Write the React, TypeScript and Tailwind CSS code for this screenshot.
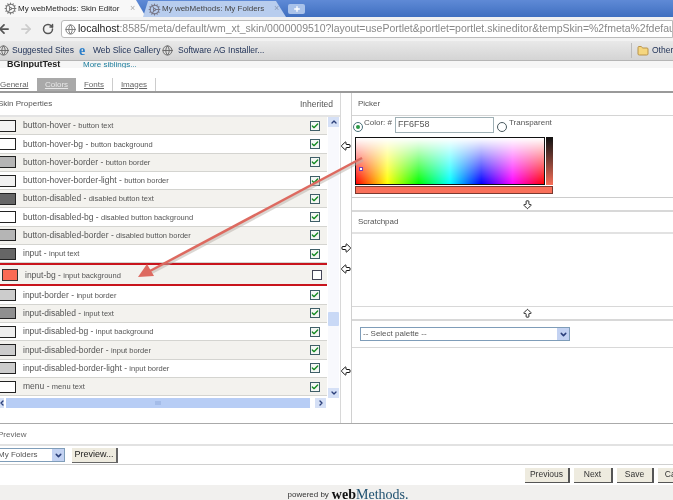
import { ArrowBigDown, ArrowBigLeft, ArrowBigRight, ArrowBigUp, ArrowLeft, ArrowRight, Check, ChevronDown, ChevronLeft, ChevronRight, ChevronUp, Cog, Folder, Globe, Plus, RotateCw } from "lucide-react"

const topRows = [
  { color: "bg-[#f3f3f3]", name: "button-hover", desc: "button text", striped: true },
  { color: "bg-white", name: "button-hover-bg", desc: "button background", striped: false },
  { color: "bg-[#b5b5b5]", name: "button-hover-border", desc: "button border", striped: true },
  { color: "bg-[#f1f1f1]", name: "button-hover-border-light", desc: "button border", striped: false },
  { color: "bg-[#666666]", name: "button-disabled", desc: "disabled button text", striped: true },
  { color: "bg-white", name: "button-disabled-bg", desc: "disabled button background", striped: false },
  { color: "bg-[#b5b5b5]", name: "button-disabled-border", desc: "disabled button border", striped: true },
  { color: "bg-[#666666]", name: "input", desc: "input text", striped: false },
]

const bottomRows = [
  { color: "bg-[#cccccc]", name: "input-border", desc: "input border", striped: false },
  { color: "bg-[#8f8f8f]", name: "input-disabled", desc: "input text", striped: true },
  { color: "bg-[#eeeeee]", name: "input-disabled-bg", desc: "input background", striped: false },
  { color: "bg-[#cccccc]", name: "input-disabled-border", desc: "input border", striped: true },
  { color: "bg-[#cccccc]", name: "input-disabled-border-light", desc: "input border", striped: false },
  { color: "bg-white", name: "menu", desc: "menu text", striped: true },
]

function PropertyRow({ color, name, desc, striped }: { color: string; name: string; desc: string; striped: boolean }) {
  return (
    <div className={`flex h-[18.3px] items-center border-b border-[#d4d4d0] ${striped ? "bg-[#f3f2ee]" : "bg-white"}`}>
      <span className={`ml-[-1px] h-[12px] w-[17px] shrink-0 border border-[#222] ${color}`} />
      <span className="ml-[7px] flex-1 truncate text-[8.5px] text-[#555]">
        {name} - <span className="text-[7.5px]">{desc}</span>
      </span>
      <span className="mr-[7px] flex h-[10px] w-[10px] shrink-0 items-center justify-center border border-[#3f5f68] bg-[#f4f7f4]">
        <Check className="h-[8px] w-[8px] text-[#128a20]" strokeWidth={4} />
      </span>
    </div>
  )
}

function Select({ label, className }: { label: string; className: string }) {
  return (
    <div className={`flex h-[14px] items-center justify-between border border-[#7f9db9] bg-white text-[8px] text-[#555] ${className}`}>
      <span className="pl-[2px] whitespace-nowrap">{label}</span>
      <span className="flex h-full w-[12px] items-center justify-center bg-[#c3d2f2]">
        <ChevronDown className="h-[9px] w-[9px] text-[#2b3f7a]" strokeWidth={4} />
      </span>
    </div>
  )
}

function FootButton({ label, className }: { label: string; className: string }) {
  return (
    <div className={`flex h-[15px] items-center justify-center border-r-2 border-b border-[#555] bg-[#eeebdf] text-[8.5px] text-[#333] ${className}`}>
      {label}
    </div>
  )
}

export default function App() {
  return (
    <div className="relative flex h-[500px] w-[673px] flex-col overflow-hidden bg-white font-['Liberation_Sans',sans-serif] blur-[0.25px]">
      {/* browser tabs */}
      <div className="flex h-[17px] shrink-0 items-end bg-gradient-to-b from-[#5f8ad6] to-[#3f6fc0]">
        <div className="flex h-[17px] w-[146px] shrink-0 items-center bg-[#f8f8f8] pl-[4px] [clip-path:polygon(0_0,136px_0,146px_100%,0_100%)]">
          <Cog className="h-[13px] w-[13px] shrink-0 text-[#777]" />
          <span className="ml-[1px] w-[107px] shrink-0 text-[8px] whitespace-nowrap text-[#222]">My webMethods: Skin Editor</span>
          <span className="ml-[5px] text-[9px] text-[#aaa]">×</span>
        </div>
        <div className="ml-[-3px] flex h-[16px] w-[143px] shrink-0 items-center bg-[#b8cdee] pl-[5px] [clip-path:polygon(5px_0,133px_0,143px_100%,0_100%)]">
          <Cog className="h-[13px] w-[13px] shrink-0 text-[#778]" />
          <span className="ml-[1px] w-[107px] shrink-0 text-[8px] whitespace-nowrap text-[#444]">My webMethods: My Folders</span>
          <span className="ml-[5px] text-[9px] text-[#8a9bb8]">×</span>
        </div>
        <div className="mb-[3px] ml-[2px] flex h-[10px] w-[17px] items-center justify-center rounded-[2px] bg-[#a9c2ea]">
          <Plus className="h-[8px] w-[8px] text-white" strokeWidth={4} />
        </div>
      </div>

      {/* toolbar */}
      <div className="flex h-[24px] shrink-0 items-center bg-[#f2f2f2]">
        <ArrowLeft className="ml-[-3px] h-[14px] w-[14px] shrink-0 text-[#555]" strokeWidth={3} />
        <ArrowRight className="ml-[8px] h-[14px] w-[14px] shrink-0 text-[#ccc]" strokeWidth={3} />
        <RotateCw className="ml-[9px] h-[12px] w-[12px] shrink-0 text-[#555]" strokeWidth={3} />
        <div className="ml-[7px] flex h-[18px] flex-1 items-center overflow-hidden rounded-l-[3px] border border-[#bbb] bg-white pl-[3px]">
          <Globe className="h-[11px] w-[11px] shrink-0 text-[#777]" />
          <span className="ml-[2px] text-[10.5px] whitespace-nowrap text-[#888]">
            <span className="text-[#222]">localhost</span>:8585/meta/default/wm_xt_skin/0000009510?layout=usePortlet&portlet=portlet.skineditor&tempSkin=%2fmeta%2fdefault
          </span>
        </div>
      </div>

      {/* bookmarks */}
      <div className="flex h-[20px] shrink-0 items-center border-b border-[#b5b5b5] bg-gradient-to-b from-[#e9e9e9] to-[#d4d4d4] text-[8.5px] text-[#1d2f55]">
        <Globe className="ml-[-2px] h-[11px] w-[11px] shrink-0 fill-[#ddd] text-[#666]" />
        <span className="ml-[3px] w-[56px] shrink-0 whitespace-nowrap">Suggested Sites</span>
        <span className="ml-[11px] w-[10px] shrink-0 font-['Liberation_Serif',serif] text-[14px] leading-none font-bold text-[#2d7fc9]">e</span>
        <span className="ml-[4px] w-[60px] shrink-0 whitespace-nowrap">Web Slice Gallery</span>
        <Globe className="ml-[9px] h-[11px] w-[11px] shrink-0 fill-[#ddd] text-[#666]" />
        <span className="ml-[5px] whitespace-nowrap">Software AG Installer...</span>
        <span className="ml-auto h-[15px] w-px bg-[#bbb]" />
        <Folder className="ml-[5px] h-[12px] w-[12px] shrink-0 fill-[#f5d67f] text-[#b8934a]" />
        <span className="ml-[3px] w-[21px] whitespace-nowrap">Other</span>
      </div>

      {/* page heading, scrolled under the bookmarks */}
      <div className="flex h-[7px] shrink-0 items-end overflow-hidden bg-[#f6f6f6]">
        <span className="mb-[-3px] ml-[7px] w-[76px] text-[9px] font-bold text-[#222]">BGInputTest</span>
        <span className="mb-[-3px] text-[8px] text-[#1c7d9c] underline">More siblings...</span>
      </div>

      {/* section tabs */}
      <div className="mt-[10px] flex h-[13px] shrink-0 items-end text-[8px] text-[#666]">
        <span className="w-[37px] underline">General</span>
        <span className="flex h-[13px] w-[39px] items-center justify-center bg-[#a9a9a9] text-[#e8e8e8] underline">Colors</span>
        <span className="flex h-[13px] w-[37px] items-center justify-center border-r border-[#ccc] underline">Fonts</span>
        <span className="flex h-[13px] w-[43px] items-center justify-center border-r border-[#ccc] underline">Images</span>
      </div>
      <div className="h-[2px] shrink-0 bg-[#9a9a9a]" />

      {/* editor */}
      <div className="flex h-[331px] shrink-0 border-b border-[#aaa]">
        <div className="flex w-[341px] shrink-0 flex-col border-r border-[#d8d8d8]">
          <div className="flex h-[24px] shrink-0 items-center justify-between border-b-2 border-[#e4e4e4] pr-[7px] text-[8px] text-[#555]">
            <span className="ml-[-2px]">Skin Properties</span>
            <span className="text-[8.5px]">Inherited</span>
          </div>
          <div className="flex h-[281px] shrink-0">
            <div className="w-[327px] shrink-0">
              {topRows.map((r) => <PropertyRow key={r.name} {...r} />)}
              <div className="flex h-[23px] items-center border-y-2 border-[#c8141c] bg-[#f3f2ee]">
                <span className="ml-[2px] h-[12px] w-[16px] shrink-0 border border-[#333] bg-[#fa6a54]" />
                <span className="ml-[7px] flex-1 text-[8.5px] text-[#555]">
                  input-bg - <span className="text-[7.5px]">input background</span>
                </span>
                <span className="mr-[5px] h-[10px] w-[10px] shrink-0 border border-[#445] bg-white" />
              </div>
              {bottomRows.map((r) => <PropertyRow key={r.name} {...r} />)}
            </div>
            <div className="ml-px flex w-[11px] shrink-0 flex-col bg-[#f8f9fd]">
              <span className="flex h-[10px] items-center justify-center bg-[#d5e0f6]">
                <ChevronUp className="h-[8px] w-[8px] text-[#2b3f7a]" strokeWidth={4} />
              </span>
              <span className="mt-[185px] h-[14px] rounded-[1px] bg-[#c9d9f6]" />
              <span className="mt-auto flex h-[10px] items-center justify-center bg-[#d5e0f6]">
                <ChevronDown className="h-[8px] w-[8px] text-[#2b3f7a]" strokeWidth={4} />
              </span>
            </div>
          </div>
          <div className="flex h-[10px] w-[327px] shrink-0 items-center">
            <span className="flex h-full w-[4px] items-center justify-center overflow-hidden bg-[#d5e0f6]">
              <ChevronLeft className="h-[8px] w-[8px] shrink-0 text-[#2b3f7a]" strokeWidth={4} />
            </span>
            <span className="ml-[2px] flex h-full w-[304px] items-center justify-center bg-[#b7cdf5]">
              <span className="h-[4px] w-[6px] bg-[#a4bce8]" />
            </span>
            <span className="ml-[5px] flex h-full w-[11px] items-center justify-center bg-[#d5e0f6]">
              <ChevronRight className="h-[8px] w-[8px] text-[#2b3f7a]" strokeWidth={4} />
            </span>
          </div>
        </div>

        {/* arrows between the list and the picker */}
        <div className="flex w-[11px] shrink-0 flex-col items-center border-r border-[#d0d0d0] text-[#111]">
          <ArrowBigLeft className="mt-[47px] h-[12px] w-[12px] shrink-0" strokeWidth={2} />
          <ArrowBigRight className="mt-[90px] h-[12px] w-[12px] shrink-0" strokeWidth={2} />
          <ArrowBigLeft className="mt-[9px] h-[12px] w-[12px] shrink-0" strokeWidth={2} />
          <ArrowBigLeft className="mt-[90px] h-[12px] w-[12px] shrink-0" strokeWidth={2} />
        </div>

        <div className="flex flex-1 flex-col text-[8px] text-[#555]">
          <div className="flex h-[105px] shrink-0 flex-col border-b border-[#ccc]">
            <div className="flex h-[23px] shrink-0 items-center border-b border-[#d4d4d4] pl-[6px]">Picker</div>
            <div className="flex h-[21px] shrink-0 items-start">
              <span className="mt-[6px] ml-[1px] flex h-[10px] w-[10px] shrink-0 items-center justify-center rounded-full border border-[#49707a]">
                <span className="h-[4px] w-[4px] rounded-full bg-[#2b9a45]" />
              </span>
              <span className="mt-[1px] ml-[1px] w-[30px] shrink-0">Color: #</span>
              <span className="mt-[1px] ml-[1px] flex h-[16px] w-[99px] shrink-0 items-center border border-[#9fb0b5] pl-[2px] text-[9px]">FF6F58</span>
              <span className="mt-[6px] ml-[3px] h-[10px] w-[10px] shrink-0 rounded-full border border-[#49595f]" />
              <span className="mt-[1px] ml-[2px]">Transparent</span>
            </div>
            <div className="ml-[3px] flex h-[48px] w-[198px] shrink-0 gap-px">
              <div className="relative h-full w-[190px] border border-[#111] bg-[linear-gradient(90deg,#f00,#ff0,#0f0,#0ff,#00f,#f0f,#f00)]">
                <div className="h-full w-full bg-gradient-to-b from-white to-transparent" />
                <span className="absolute top-[29px] left-[3px] h-[4px] w-[4px] border border-[#7a3fb0] bg-white" />
              </div>
              <div className="h-full w-[7px] bg-gradient-to-b from-[#111] to-[#fa6f58]" />
            </div>
            <div className="mt-[1px] ml-[3px] h-[8px] w-[198px] border border-[#7a3a30] bg-[#f9705a]" />
          </div>
          <div className="flex h-[12px] shrink-0 items-center pl-[170px]">
            <ArrowBigDown className="h-[11px] w-[11px] text-[#111]" strokeWidth={2} />
          </div>
          <div className="flex h-[97px] shrink-0 flex-col border-t-2 border-b border-[#d8d8d8]">
            <div className="flex h-[22px] shrink-0 items-center border-b-2 border-[#e2e2e2] pl-[6px]">Scratchpad</div>
          </div>
          <div className="flex h-[12px] shrink-0 items-center pl-[170px]">
            <ArrowBigUp className="h-[11px] w-[11px] text-[#111]" strokeWidth={2} />
          </div>
          <div className="flex h-[29px] shrink-0 items-center border-t-2 border-b border-[#d8d8d8] pl-[8px]">
            <Select label="-- Select palette --" className="w-[210px]" />
          </div>
        </div>
      </div>

      {/* preview */}
      <div className="flex h-[22px] shrink-0 items-center border-b-2 border-[#e2e2e2] pt-[2px] text-[8px] text-[#666]">
        <span className="ml-[-2px]">Preview</span>
      </div>
      <div className="flex h-[19px] shrink-0 items-center gap-[7px] border-b border-[#d0d0d0]">
        <Select label="My Folders" className="ml-[-5px] w-[70px] shrink-0" />
        <div className="flex h-[15px] w-[46px] items-center justify-center border-r-2 border-b border-[#666] bg-[#eeebdf] text-[9px] text-[#222]">Preview...</div>
      </div>
      <div className="flex h-[20px] shrink-0 items-center justify-end gap-[4px]">
        <FootButton label="Previous" className="w-[45px] shrink-0" />
        <FootButton label="Next" className="w-[39px] shrink-0" />
        <FootButton label="Save" className="w-[37px] shrink-0" />
        <FootButton label="Cancel" className="mr-[-27px] w-[42px] shrink-0" />
      </div>
      <div className="flex flex-1 items-center justify-center bg-[#f1f0ee] pt-[3px] pl-[23px]">
        <span className="text-[8px] text-[#333]">powered by</span>
        <span className="ml-[3px] font-['Liberation_Serif',serif] text-[14px] leading-none font-bold text-[#111]">
          web<span className="font-normal text-[#1d4f6e]">Methods.</span>
        </span>
      </div>

      {/* annotation arrow drawn over the list */}
      <svg className="pointer-events-none absolute top-0 left-0" width="673" height="500" viewBox="0 0 673 500">
        <line x1="362" y1="158" x2="150" y2="271" stroke="#b9b0a8" strokeWidth="3" opacity="0.5" transform="translate(1 2)" />
        <line x1="362" y1="158" x2="150" y2="271" stroke="#dd6a60" strokeWidth="2.5" />
        <polygon points="138,277 147,264 154,276" fill="#dd6a60" />
      </svg>
    </div>
  )
}
